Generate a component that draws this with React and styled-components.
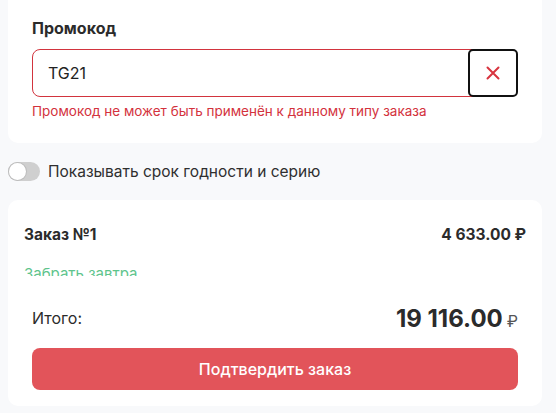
import React, { useState } from 'react';
import styled, { createGlobalStyle } from 'styled-components';

const GlobalStyle = createGlobalStyle`
  html, body {
    margin: 0;
    padding: 0;
    background: #f8f9fb;
    font-family: Inter, "Noto Sans", sans-serif;
    color: #2b2b2b;
  }
  * { box-sizing: border-box; }
`;

const Page = styled.div`
  position: relative;
  width: 534px;
  height: 413px;
  margin-left: 8px;
  overflow: hidden;
`;

const PromoCard = styled.section`
  background: #fff;
  border-radius: 0 0 10px 10px;
  padding: 18px 24px 0;
  height: 143px;
`;

const Label = styled.div`
  font-size: 16px;
  font-weight: 700;
  line-height: 20px;
  color: #2b2b2b;
  margin-bottom: 11px;
`;

const InputRow = styled.div`
  display: flex;
  height: 48px;
  border: 1px solid #d2343e;
  border-radius: 8px;
  position: relative;
`;

const Input = styled.input`
  flex: 1;
  border: none;
  outline: none;
  background: transparent;
  padding: 0 15px;
  font-family: inherit;
  font-size: 16px;
  color: #222;
  border-radius: 8px 0 0 8px;
`;

const ClearButton = styled.button`
  width: 50px;
  margin: -1px -1px -1px 0;
  border: 2px solid #111;
  border-radius: 5px;
  background: #fff;
  display: flex;
  align-items: center;
  justify-content: center;
  padding: 0;
  cursor: pointer;
`;

const ErrorText = styled.div`
  margin-top: 5px;
  font-size: 13.5px;
  line-height: 18px;
  color: #d3323d;
`;

const ToggleRow = styled.label`
  display: flex;
  align-items: center;
  gap: 8px;
  height: 57px;
  font-size: 15.5px;
  color: #2f2f2f;
  cursor: pointer;
`;

const Track = styled.span`
  width: 32px;
  height: 19px;
  border-radius: 10px;
  background: ${p => (p.$on ? '#5ec48c' : '#cfcfcf')};
  position: relative;
  flex-shrink: 0;
`;

const Knob = styled.span`
  position: absolute;
  top: 1px;
  left: ${p => (p.$on ? '14px' : '1px')};
  width: 17px;
  height: 17px;
  border-radius: 50%;
  background: #fff;
  box-shadow: 0 0 0 1px #bdbdbd;
`;

const OrderCard = styled.section`
  background: #fff;
  border-radius: 10px 10px 0 0;
  padding: 24px 16px 0;
  height: 120px;
`;

const OrderHead = styled.div`
  display: flex;
  justify-content: space-between;
  font-size: 15.5px;
  font-weight: 700;
  line-height: 22px;
  color: #2b2b2b;
`;

const Pickup = styled.div`
  margin-top: 18px;
  font-size: 15px;
  line-height: 20px;
  color: #5ec48c;
`;

const Footer = styled.footer`
  position: absolute;
  left: 0;
  right: 0;
  top: 276px;
  height: 130px;
  background: #fff;
  border-radius: 0 0 10px 10px;
  padding: 28px 24px 0;
`;

const TotalRow = styled.div`
  display: flex;
  justify-content: space-between;
  align-items: center;
  height: 28px;
  margin-bottom: 16px;
`;

const TotalLabel = styled.span`
  font-size: 16px;
  color: #2b2b2b;
`;

const TotalSum = styled.span`
  font-size: 24px;
  font-weight: 700;
  color: #2b2b2b;
`;

const Currency = styled.span`
  font-size: 16px;
  font-weight: 400;
  color: #555;
  margin-left: 4px;
`;

const ConfirmButton = styled.button`
  width: 100%;
  height: 42px;
  border: none;
  border-radius: 8px;
  background: #e2545a;
  color: #fff;
  font-family: inherit;
  font-size: 16px;
  font-weight: 500;
  cursor: pointer;
`;

export default function App() {
  const [code, setCode] = useState('TG21');
  const [show, setShow] = useState(false);

  return (
    <>
      <GlobalStyle />
      <Page>
        <PromoCard>
          <Label>Промокод</Label>
          <InputRow>
            <Input value={code} onChange={e => setCode(e.target.value)} />
            <ClearButton onClick={() => setCode('')} aria-label="Очистить">
              <svg width="14" height="14" viewBox="0 0 14 14">
                <path d="M1.5 1.5 L12.5 12.5 M12.5 1.5 L1.5 12.5" stroke="#d8343f" strokeWidth="2" strokeLinecap="round" />
              </svg>
            </ClearButton>
          </InputRow>
          <ErrorText>Промокод не может быть применён к данному типу заказа</ErrorText>
        </PromoCard>

        <ToggleRow onClick={() => setShow(!show)}>
          <Track $on={show}>
            <Knob $on={show} />
          </Track>
          Показывать срок годности и серию
        </ToggleRow>

        <OrderCard>
          <OrderHead>
            <span>Заказ №1</span>
            <span>4 633.00 ₽</span>
          </OrderHead>
          <Pickup>Забрать завтра</Pickup>
        </OrderCard>

        <Footer>
          <TotalRow>
            <TotalLabel>Итого:</TotalLabel>
            <TotalSum>
              19 116.00<Currency>₽</Currency>
            </TotalSum>
          </TotalRow>
          <ConfirmButton>Подтвердить заказ</ConfirmButton>
        </Footer>
      </Page>
    </>
  );
}
